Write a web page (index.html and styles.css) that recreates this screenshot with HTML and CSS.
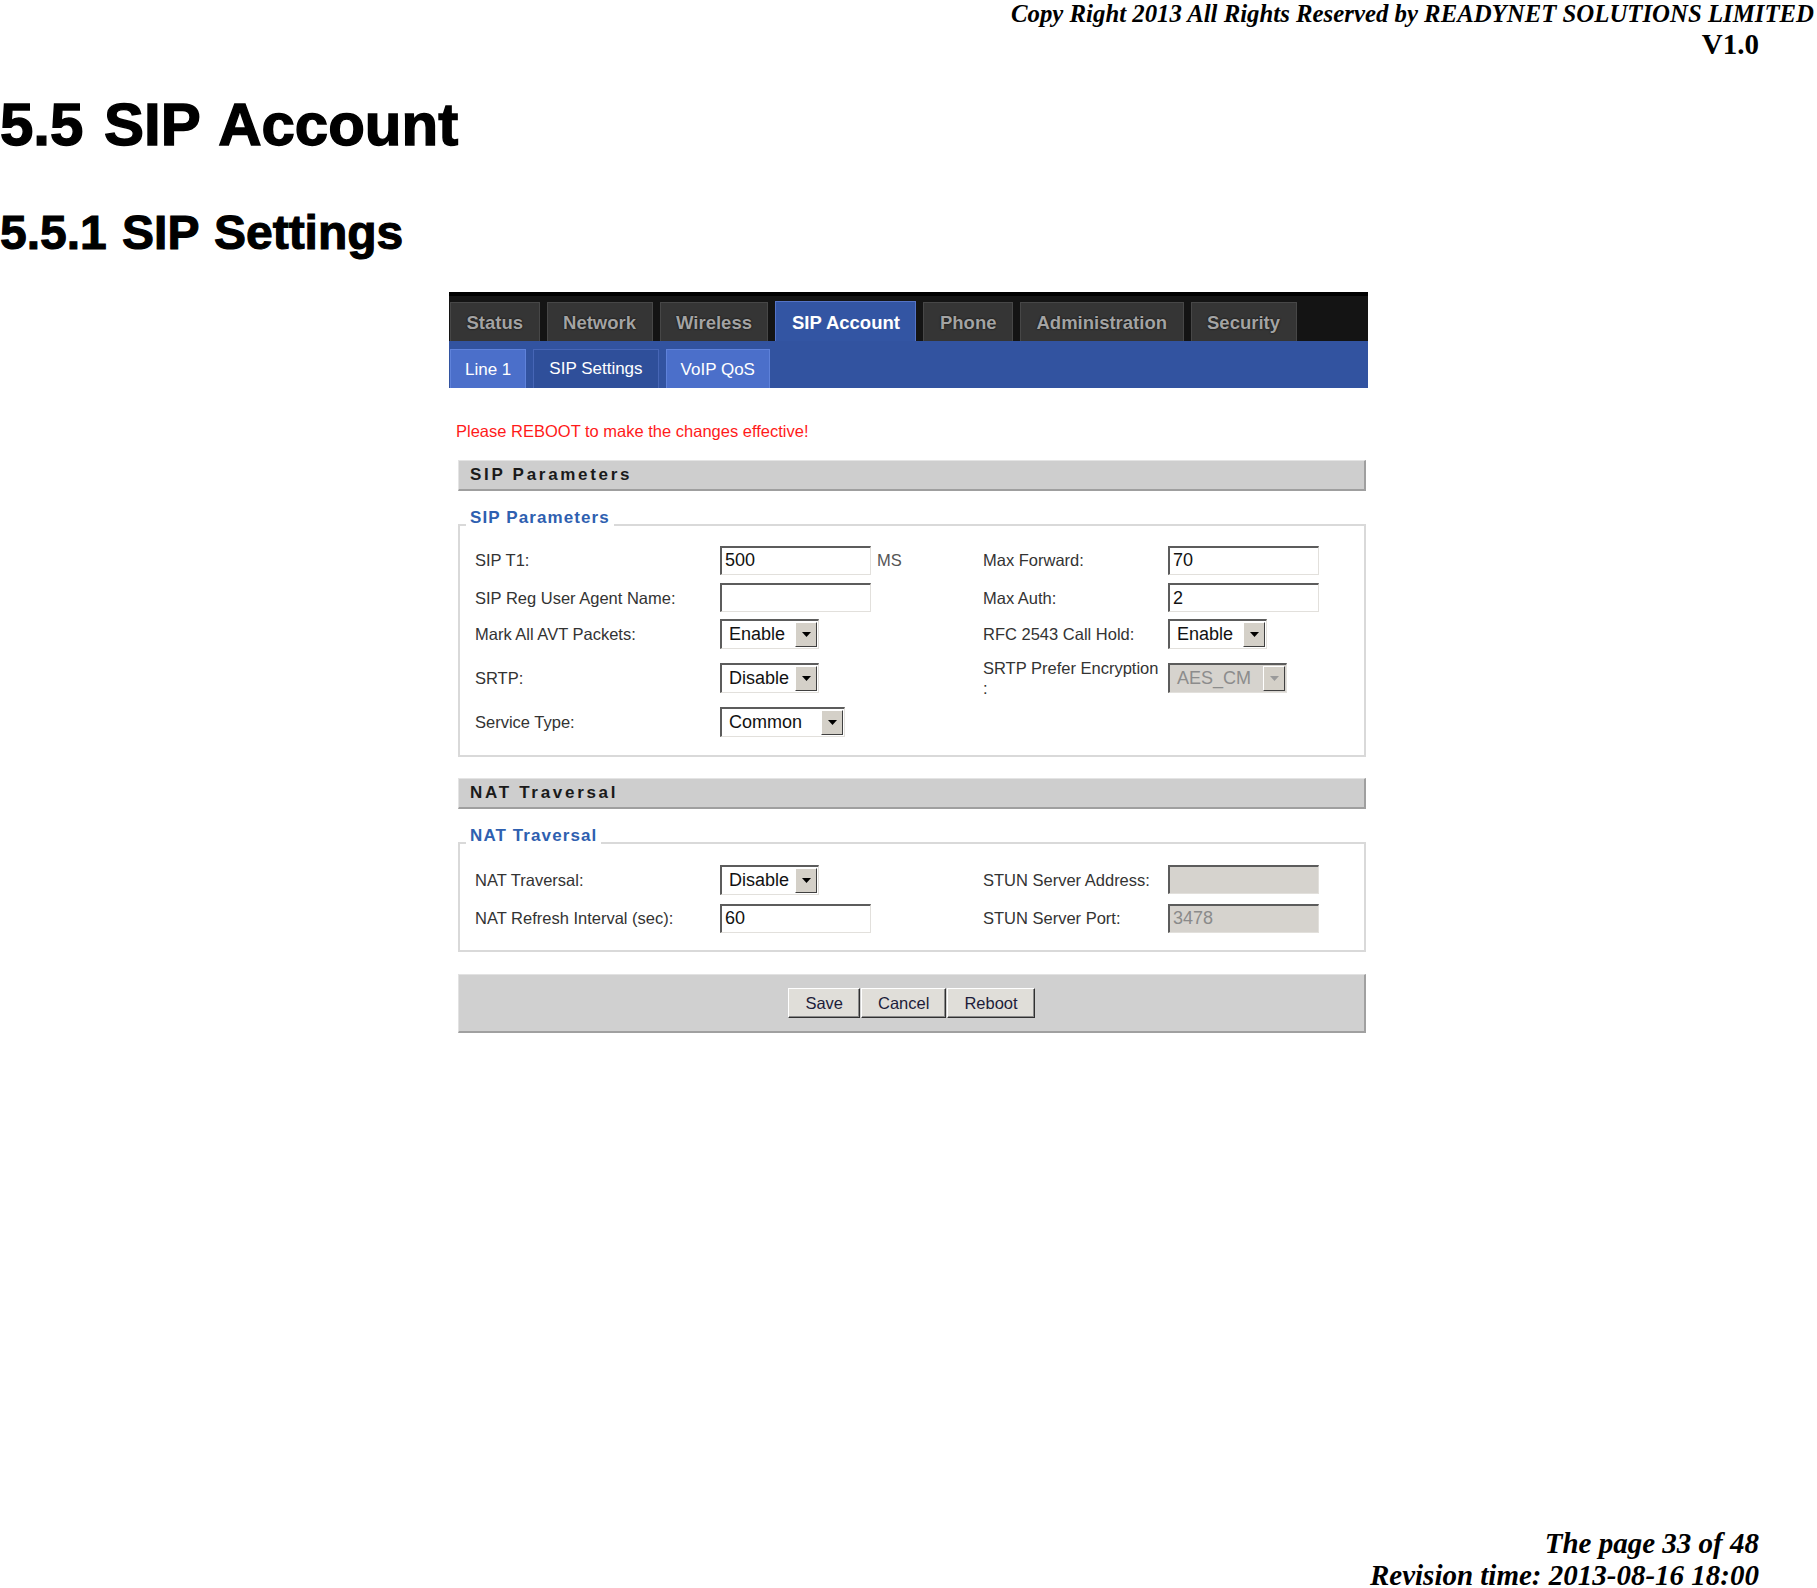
FILE: index.html
```html
<!DOCTYPE html>
<html lang="en">
<head>
<meta charset="utf-8">
<title>5.5 SIP Account</title>
<link rel="stylesheet" href="styles.css">
</head>
<body>
<header class="doc-head">
  <div class="copy">Copy Right 2013 All Rights Reserved by READYNET SOLUTIONS LIMITED</div>
  <div class="ver">V1.0</div>
</header>

<h1 class="h1">5.5 SIP Account</h1>
<h2 class="h2">5.5.1 SIP Settings</h2>

<div class="panel">
  <nav class="tabs">
    <span class="tab">Status</span>
    <span class="tab">Network</span>
    <span class="tab">Wireless</span>
    <span class="tab active">SIP Account</span>
    <span class="tab">Phone</span>
    <span class="tab">Administration</span>
    <span class="tab">Security</span>
  </nav>
  <nav class="subtabs">
    <span class="sub">Line 1</span>
    <span class="sub active">SIP Settings</span>
    <span class="sub">VoIP QoS</span>
  </nav>

  <div class="content">
    <p class="warn">Please REBOOT to make the changes effective!</p>

    <div class="sec-head">SIP Parameters</div>
    <fieldset class="group sip">
      <legend>SIP Parameters</legend>
      <div class="grid">
        <span class="lbl">SIP T1:</span>
        <span class="cell"><input class="txt" type="text" value="500"><span class="unit">MS</span></span>
        <span class="lbl">Max Forward:</span>
        <span class="cell"><input class="txt" type="text" value="70"></span>

        <span class="lbl">SIP Reg User Agent Name:</span>
        <span class="cell"><input class="txt" type="text" value=""></span>
        <span class="lbl">Max Auth:</span>
        <span class="cell"><input class="txt" type="text" value="2"></span>

        <span class="lbl">Mark All AVT Packets:</span>
        <span class="cell"><span class="combo w99"><span class="val">Enable</span><span class="arrow"><svg width="9" height="5" viewBox="0 0 9 5"><polygon points="0,0 9,0 4.5,5" fill="#000"/></svg></span></span></span>
        <span class="lbl">RFC 2543 Call Hold:</span>
        <span class="cell"><span class="combo w99"><span class="val">Enable</span><span class="arrow"><svg width="9" height="5" viewBox="0 0 9 5"><polygon points="0,0 9,0 4.5,5" fill="#000"/></svg></span></span></span>

        <span class="lbl">SRTP:</span>
        <span class="cell"><span class="combo w99"><span class="val">Disable</span><span class="arrow"><svg width="9" height="5" viewBox="0 0 9 5"><polygon points="0,0 9,0 4.5,5" fill="#000"/></svg></span></span></span>
        <span class="lbl wrap">SRTP Prefer Encryption :</span>
        <span class="cell"><span class="combo w119 dis"><span class="val">AES_CM</span><span class="arrow"><svg width="9" height="5" viewBox="0 0 9 5"><polygon points="0,0 9,0 4.5,5" fill="#9a9a9a"/></svg></span></span></span>

        <span class="lbl">Service Type:</span>
        <span class="cell"><span class="combo w125"><span class="val">Common</span><span class="arrow"><svg width="9" height="5" viewBox="0 0 9 5"><polygon points="0,0 9,0 4.5,5" fill="#000"/></svg></span></span></span>
      </div>
    </fieldset>

    <div class="sec-head nat-head">NAT Traversal</div>
    <fieldset class="group nat">
      <legend>NAT Traversal</legend>
      <div class="grid">
        <span class="lbl">NAT Traversal:</span>
        <span class="cell"><span class="combo w99"><span class="val">Disable</span><span class="arrow"><svg width="9" height="5" viewBox="0 0 9 5"><polygon points="0,0 9,0 4.5,5" fill="#000"/></svg></span></span></span>
        <span class="lbl">STUN Server Address:</span>
        <span class="cell"><input class="txt" type="text" value="" disabled></span>

        <span class="lbl">NAT Refresh Interval (sec):</span>
        <span class="cell"><input class="txt" type="text" value="60"></span>
        <span class="lbl">STUN Server Port:</span>
        <span class="cell"><input class="txt" type="text" value="3478" disabled></span>
      </div>
    </fieldset>

    <div class="actions">
      <button class="btn-ui" type="button">Save</button>
      <button class="btn-ui" type="button">Cancel</button>
      <button class="btn-ui" type="button">Reboot</button>
    </div>
  </div>
</div>

<footer class="doc-foot">
  <div class="pg">The page 33 of 48</div>
  <div class="rev">Revision time: 2013-08-16 18:00</div>
</footer>
</body>
</html>
```

FILE: styles.css
```css
html, body {
  margin: 0;
  padding: 0;
}

body {
  width: 1817px;
  min-height: 1588px;
  display: flex;
  flex-direction: column;
  background: #fff;
  color: #000;
  font-family: "Liberation Sans", Arial, sans-serif;
}

/* document header */
.doc-head {
  font-family: "Liberation Serif", "Times New Roman", serif;
  font-weight: bold;
  text-align: right;
}

.copy {
  font-style: italic;
  font-size: 24.8px;
  line-height: 27.5px;
  padding-right: 3px;
  white-space: nowrap;
}

.ver {
  font-size: 29px;
  line-height: 32.5px;
  padding-right: 58px;
}

.h1 {
  margin: 31px 0 0;
  font-size: 60px;
  line-height: 67px;
  font-weight: bold;
  word-spacing: 4px;
  -webkit-text-stroke: 1.4px #000;
}

.h2 {
  margin: 48px 0 0;
  font-size: 48px;
  line-height: 54px;
  font-weight: bold;
  word-spacing: 2px;
  -webkit-text-stroke: 1.1px #000;
}

/* UI panel */
.panel {
  margin: 32px 0 0 449px;
  width: 919px;
}

.tabs {
  display: flex;
  align-items: flex-end;
  gap: 7px;
  height: 49px;
  box-sizing: border-box;
  padding-left: 1px;
  background: #141414;
  border-top: 4px solid #000;
}

.tab {
  box-sizing: border-box;
  height: 39px;
  padding: 1px 15.5px 0;
  border: 1px solid #474747;
  border-bottom: 0;
  background: #353535;
  color: #a3a3a3;
  font-weight: bold;
  font-size: 18.5px;
  line-height: 37px;
  text-shadow: 0 0 2px #000;
  white-space: nowrap;
}

.tab.active {
  height: 40px;
  padding-top: 2px;
  background: #3355a3;
  border-color: #5473c6;
  color: #fff;
  text-shadow: none;
}

.subtabs {
  display: flex;
  align-items: flex-end;
  gap: 7px;
  height: 47px;
  box-sizing: border-box;
  padding-left: 1px;
  background: #3253a0;
}

.sub {
  box-sizing: border-box;
  height: 39px;
  padding: 1px 14px 0;
  border: 1px solid #5f82da;
  border-bottom: 0;
  background: #4b6fca;
  color: #fff;
  font-size: 17px;
  line-height: 37px;
  white-space: nowrap;
}

.sub.active {
  background: #2f4f9a;
  border-color: #4766b6;
  padding: 0 15px;
}

.content {
  padding: 0 2px 0 9px;
}

.warn {
  margin: 33px 0 0 -2px;
  color: #ff1a1a;
  font-size: 16.5px;
  line-height: 20px;
}

.sec-head {
  margin-top: 19px;
  height: 31px;
  box-sizing: border-box;
  border-top: 1px solid #e4e4e4;
  border-left: 1px solid #e4e4e4;
  border-bottom: 2px solid #9f9f9f;
  border-right: 2px solid #9f9f9f;
  background: #cecece;
  padding-left: 11px;
  font-weight: bold;
  font-size: 17px;
  letter-spacing: 2.7px;
  line-height: 28px;
  color: #1a1a1a;
}

.nat-head {
  margin-top: 21px;
}

.group {
  margin: 17px 0 0;
  padding: 0 0 17px 6px;
  border: 2px solid #d9d9d9;
  min-width: 0;
}

.nat {
  padding-bottom: 13px;
}

.group legend {
  padding: 0 4px 14px;
  font-weight: bold;
  font-size: 17px;
  line-height: 20px;
  letter-spacing: 1.1px;
  color: #2e60b0;
}

.grid {
  display: grid;
  grid-template-columns: 245px 263px 185px 1fr;
  padding-left: 9px;
  align-items: center;
}

.sip .grid {
  grid-template-rows: 36px 39px 34px 54px 33px;
}

.nat .grid {
  grid-template-rows: 39px 38px;
}

.lbl {
  font-size: 16.5px;
  line-height: 20px;
  color: #333;
}

.lbl.wrap {
  padding-right: 8px;
}

.cell {
  display: flex;
  align-items: center;
  gap: 6px;
}

.unit {
  font-size: 16.5px;
  color: #555;
}

.txt {
  box-sizing: border-box;
  width: 151px;
  height: 29px;
  margin: 0;
  padding: 0 3px;
  border-style: solid;
  border-width: 2px 1px 1px 2px;
  border-color: #5c5c5c #e2e0dc #e2e0dc #5c5c5c;
  background: #fff;
  font-family: "Liberation Sans", Arial, sans-serif;
  font-size: 18px;
  color: #111;
  outline: none;
}

.txt:disabled {
  background: #d6d3ce;
  color: #8a8a8a;
  -webkit-text-fill-color: #8a8a8a;
}

.combo {
  box-sizing: border-box;
  height: 30px;
  display: flex;
  align-items: stretch;
  border-style: solid;
  border-width: 2px 1px 1px 2px;
  border-color: #5c5c5c #e2e0dc #e2e0dc #5c5c5c;
  background: #fff;
  padding: 1px;
}

.w99 { width: 99px; }
.w119 { width: 119px; }
.w125 { width: 125px; }

.combo .val {
  flex: 1;
  padding-left: 6px;
  font-size: 18px;
  line-height: 25px;
  color: #111;
  white-space: nowrap;
}

.combo .arrow {
  width: 22px;
  box-sizing: border-box;
  background: #d4d0c8;
  border: 1px solid;
  border-color: #fff #404040 #404040 #fff;
  display: flex;
  align-items: center;
  justify-content: center;
}

.combo.dis {
  background: #d6d3ce;
}

.combo.dis .val {
  color: #8c8c8c;
}

.actions {
  margin-top: 22px;
  height: 59px;
  box-sizing: border-box;
  border-top: 1px solid #e2e2e2;
  border-left: 1px solid #e2e2e2;
  border-bottom: 2px solid #a0a0a0;
  border-right: 2px solid #a0a0a0;
  background: #d0d0d0;
  display: flex;
  align-items: flex-start;
  justify-content: center;
  gap: 1px;
  padding-top: 13px;
}

.btn-ui {
  height: 30px;
  box-sizing: border-box;
  margin: 0;
  padding: 0 16px;
  font-family: "Liberation Sans", Arial, sans-serif;
  font-size: 16.5px;
  color: #1c1c3a;
  background: #e0ded9;
  border: 1px solid;
  border-color: #fff #303030 #303030 #fff;
  box-shadow: inset -1px -1px 0 #8a8a8a;
}

/* document footer */
.doc-foot {
  margin-top: auto;
  font-family: "Liberation Serif", "Times New Roman", serif;
  font-weight: bold;
  font-style: italic;
  font-size: 29px;
  line-height: 26px;
  text-align: right;
  padding-right: 58px;
}

.doc-foot .rev {
  margin-top: 6px;
}
```
